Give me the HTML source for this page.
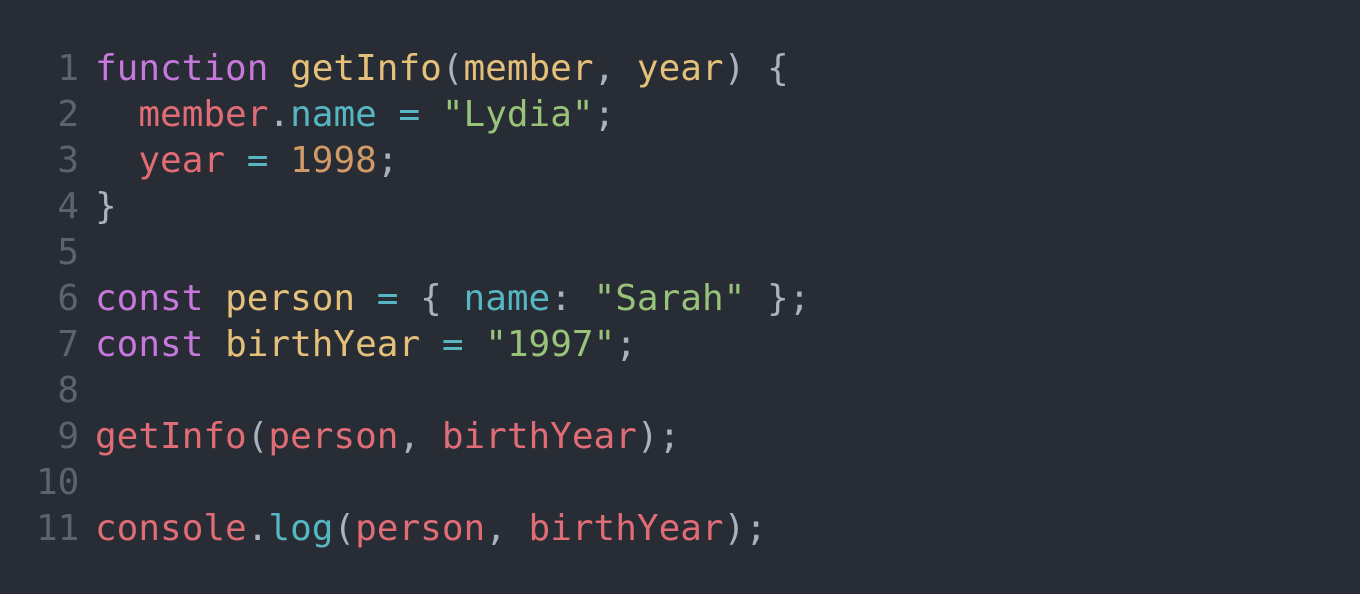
<!DOCTYPE html>
<html><head><style>
html,body{margin:0;padding:0;background:#282c34;width:1360px;height:594px;overflow:hidden}
pre{margin:0;position:absolute;left:36px;top:46px;font-family:"DejaVu Sans Mono","Liberation Mono",monospace;font-size:36px;line-height:46px;color:#abb2bf}
.n{color:#5c6370;display:inline-block;width:43px;text-align:right;margin-right:16px}
.k{color:#c678dd}.y{color:#e5c07b}.r{color:#e06c75}.c{color:#56b6c2}.g{color:#98c379}.o{color:#d19a66}
</style></head><body>
<pre><span class="n">1</span><span class="k">function</span> <span class="y">getInfo</span>(<span class="y">member</span>, <span class="y">year</span>) {
<span class="n">2</span>  <span class="r">member</span>.<span class="c">name</span> <span class="c">=</span> <span class="g">"Lydia"</span>;
<span class="n">3</span>  <span class="r">year</span> <span class="c">=</span> <span class="o">1998</span>;
<span class="n">4</span>}
<span class="n">5</span>
<span class="n">6</span><span class="k">const</span> <span class="y">person</span> <span class="c">=</span> { <span class="c">name</span>: <span class="g">"Sarah"</span> };
<span class="n">7</span><span class="k">const</span> <span class="y">birthYear</span> <span class="c">=</span> <span class="g">"1997"</span>;
<span class="n">8</span>
<span class="n">9</span><span class="r">getInfo</span>(<span class="r">person</span>, <span class="r">birthYear</span>);
<span class="n">10</span>
<span class="n">11</span><span class="r">console</span>.<span class="c">log</span>(<span class="r">person</span>, <span class="r">birthYear</span>);
</pre>
</body></html>
